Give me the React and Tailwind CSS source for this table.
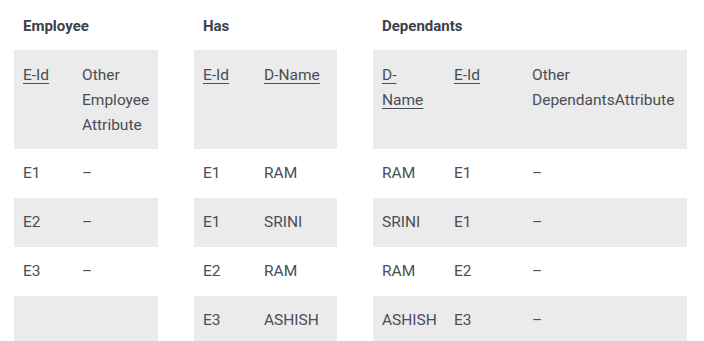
import React from 'react';

const tables = [
  {
    title: 'Employee',
    widths: ['w-[59px]', 'w-[85px]'],
    total: 'w-[144px]',
    head: [
      { text: 'E-Id', key: true },
      { text: 'Other Employee Attribute' },
    ],
    rows: [
      ['E1', '–'],
      ['E2', '–'],
      ['E3', '–'],
      ['\u00a0', '\u00a0'],
    ],
  },
  {
    title: 'Has',
    widths: ['w-[61px]', 'w-[82px]'],
    total: 'w-[143px]',
    head: [
      { text: 'E-Id', key: true },
      { text: 'D-Name', key: true },
    ],
    rows: [
      ['E1', 'RAM'],
      ['E1', 'SRINI'],
      ['E2', 'RAM'],
      ['E3', 'ASHISH'],
    ],
  },
  {
    title: 'Dependants',
    widths: ['w-[72px]', 'w-[78px]', 'w-[164px]'],
    total: 'w-[314px]',
    head: [
      { text: 'D- Name', key: true },
      { text: 'E-Id', key: true },
      { text: 'Other DependantsAttribute' },
    ],
    rows: [
      ['RAM', 'E1', '–'],
      ['SRINI', 'E1', '–'],
      ['RAM', 'E2', '–'],
      ['ASHISH', 'E3', '–'],
    ],
  },
];

function Relation({ table }) {
  return (
    <div className={`${table.total} shrink-0`}>
      <div className="h-[50px] pt-[14px] pl-[9px] text-[15px] leading-[24px] font-bold text-[#3c4049]">
        {table.title}
      </div>
      <table className="w-full table-fixed border-collapse">
        <colgroup>
          {table.widths.map((w, i) => (
            <col key={i} className={w} />
          ))}
        </colgroup>
        <thead>
          <tr className="bg-[#ebebeb] h-[99px]">
            {table.head.map((h, i) => (
              <th
                key={i}
                className="px-[9px] pt-[13px] pb-[11px] align-top text-left font-normal leading-[25px]"
              >
                <span className={h.key ? 'underline underline-offset-[3px] decoration-1' : ''}>
                  {h.text}
                </span>
              </th>
            ))}
          </tr>
        </thead>
        <tbody>
          {table.rows.map((row, r) => (
            <tr key={r} className={r % 2 === 1 ? 'bg-[#ebebeb]' : 'bg-white'}>
              {row.map((cell, c) => (
                <td key={c} className="px-[9px] py-3 leading-[25px] align-top">
                  {cell}
                </td>
              ))}
            </tr>
          ))}
        </tbody>
      </table>
    </div>
  );
}

export default function App() {
  return (
    <div className="min-h-screen bg-white pl-[14px] flex gap-[36px] text-[15.5px] text-[#4a4d55] font-['Roboto',sans-serif]">
      {tables.map((t) => (
        <Relation key={t.title} table={t} />
      ))}
    </div>
  );
}
